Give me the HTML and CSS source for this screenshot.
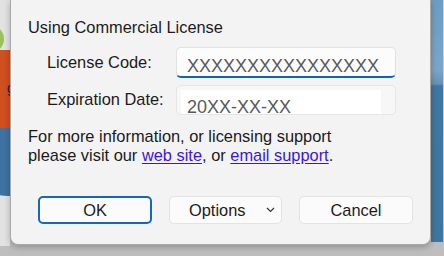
FILE: index.html
```html
<!DOCTYPE html>
<html>
<head>
<meta charset="utf-8">
<link rel="stylesheet" href="styles.css">
</head>
<body>
<div class="desktop">
  <div class="left-art">
    <span class="blob green"></span>
    <span class="blob orange"></span>
    <span class="blob blue"></span>
    <span class="glyph">g</span>
  </div>
  <div class="dialog">
    <div class="title">Using Commercial License</div>
    <div class="form">
      <label class="label">License Code:</label>
      <div class="field active"><span class="value">XXXXXXXXXXXXXXXX</span></div>
      <label class="label">Expiration Date:</label>
      <div class="field readonly"><div class="inner"><span class="value">20XX-XX-XX</span></div></div>
    </div>
    <p class="info">For more information, or licensing support<br>please visit our <a href="#">web site</a>, or <a href="#">email support</a>.</p>
    <div class="buttons">
      <button class="btn primary">OK</button>
      <button class="btn split"><span>Options</span><svg class="chev" width="9" height="6" viewBox="0 0 9 6"><path d="M1 1 L4.5 4.5 L8 1" fill="none" stroke="#333" stroke-width="1.2"/></svg></button>
      <button class="btn">Cancel</button>
    </div>
  </div>
  <div class="right-art"></div>
</div>
</body>
</html>
```
FILE: styles.css
```css
html, body {
  margin: 0;
  padding: 0;
}
body {
  width: 444px;
  height: 256px;
  overflow: hidden;
  font-family: "Liberation Sans", Arial, sans-serif;
  color: #1b1b1b;
}
.desktop {
  display: flex;
  align-items: flex-start;
  height: 256px;
  background: linear-gradient(#d2d2d2, #bdbdbd);
}
.left-art {
  position: relative;
  width: 10px;
  height: 246px;
  background: #e2e2e2;
  overflow: hidden;
  flex: none;
}
.blob {
  position: absolute;
  border-radius: 50%;
}
.green {
  left: -30px;
  top: 24px;
  width: 34px;
  height: 30px;
  background: #9cc15a;
}
.orange {
  left: -40px;
  top: 50px;
  width: 80px;
  height: 80px;
  background: #cf4f1f;
  border-radius: 40px 0 0 0;
}
.blue {
  left: -40px;
  top: 128px;
  width: 60px;
  height: 68px;
  background: #3f72a0;
  border-radius: 0 0 0 48px;
}
.glyph {
  position: absolute;
  left: 7px;
  top: 80px;
  font-size: 14px;
  color: #1e1e1e;
}
.dialog {
  flex: none;
  width: 421px;
  height: 245px;
  background: #f3f3f3;
  border: 1px solid #a9a9a9;
  border-top: none;
  border-radius: 0 0 8px 8px;
  box-shadow: 0 2px 6px rgba(0,0,0,0.25);
  padding: 0 0 0 17px;
  box-sizing: border-box;
  position: relative;
  z-index: 1;
}
.right-art {
  flex: none;
  width: 12px;
  height: 242px;
  background: linear-gradient(#6b9dc4 0, #7aa6c8 70px, #6791b6 84px, #3f77a1 86px, #3f76a0 100%);
}
.title {
  font-size: 16.4px;
  line-height: 18px;
  padding-top: 18px;
}
.form {
  display: grid;
  grid-template-columns: 129px 220px;
  grid-auto-rows: 31px;
  row-gap: 6px;
  align-items: center;
  margin: 11px 0 0 19px;
}
.label {
  font-size: 16.4px;
  line-height: 18px;
  margin-top: -2px;
}
.field {
  height: 31px;
  box-sizing: border-box;
  border: 1px solid #e2e2e2;
  border-radius: 5px;
  background: #fcfcfc;
  font-size: 18px;
  color: #5a5a5a;
  overflow: hidden;
  position: relative;
}
.field .value {
  display: block;
  padding-left: 10px;
  line-height: 36px;
}
.field.active {
  border-bottom: 2px solid #0a66bd;
}
.field.readonly {
  height: 30px;
  background: #f7f7f7;
  border-color: #e6e6e6;
}
.field.readonly .inner {
  margin: 4px 0 0 4px;
  width: 200px;
  height: 30px;
  background: #ffffff;
}
.field.readonly .value {
  padding-left: 6px;
  line-height: 34px;
}
.info {
  margin: 12px 0 0 0;
  font-size: 16.4px;
  line-height: 19px;
}
.info a {
  color: #3a18d3;
  text-decoration: underline;
  text-underline-offset: 2px;
}
.buttons {
  display: flex;
  gap: 17px;
  margin: 31px 0 0 10px;
}
.btn {
  width: 114px;
  height: 28px;
  box-sizing: border-box;
  border: 1px solid #e3e3e3;
  border-radius: 5px;
  background: #fbfbfb;
  font-family: "Liberation Sans", Arial, sans-serif;
  font-size: 16.4px;
  color: #1b1b1b;
  padding: 0;
  display: flex;
  align-items: center;
  justify-content: center;
}
.btn.primary {
  border: 2px solid #1368bd;
  border-radius: 5px;
}
.btn.split {
  width: 113px;
  justify-content: flex-start;
  padding-left: 19px;
  text-align: left;
}
.btn.split span {
  flex: 1;
}
.chev {
  margin-right: 6px;
}
```
